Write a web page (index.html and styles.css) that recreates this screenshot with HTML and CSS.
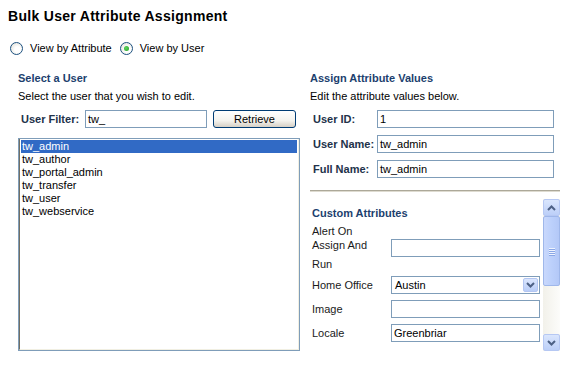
FILE: index.html
```html
<!DOCTYPE html>
<html>
<head>
<meta charset="utf-8">
<link rel="stylesheet" href="styles.css">
</head>
<body>
<div class="page">
  <h1 class="title">Bulk User Attribute Assignment</h1>
  <div class="toggle">
    <label class="radio-opt"><span class="radio"></span>View by Attribute</label>
    <label class="radio-opt"><span class="radio checked"><span class="dot"></span></span>View by User</label>
  </div>
  <div class="columns">
    <div class="col-left">
      <h2 class="heading">Select a User</h2>
      <p class="desc">Select the user that you wish to edit.</p>
      <div class="filter-row">
        <span class="lbl">User Filter:</span>
        <span class="input filter-input">tw_</span>
        <span class="btn">Retrieve</span>
      </div>
      <div class="listbox">
        <div class="listbox-inner">
          <div class="item selected">tw_admin</div>
          <div class="item">tw_author</div>
          <div class="item">tw_portal_admin</div>
          <div class="item">tw_transfer</div>
          <div class="item">tw_user</div>
          <div class="item">tw_webservice</div>
        </div>
      </div>
    </div>
    <div class="col-right">
      <h2 class="heading">Assign Attribute Values</h2>
      <p class="desc">Edit the attribute values below.</p>
      <div class="field-row"><span class="lbl field-lbl">User ID:</span><span class="input field-input">1</span></div>
      <div class="field-row"><span class="lbl field-lbl">User Name:</span><span class="input field-input">tw_admin</span></div>
      <div class="field-row"><span class="lbl field-lbl">Full Name:</span><span class="input field-input">tw_admin</span></div>
      <div class="rule"></div>
      <div class="custom">
        <div class="custom-content">
          <h2 class="heading custom-heading">Custom Attributes</h2>
          <div class="attr-row attr-tall">
            <span class="attr-lbl tall-lbl"><span class="ln">Alert On</span><span class="ln">Assign And</span><span class="ln ln-run">Run</span></span>
            <span class="input attr-input"></span>
          </div>
          <div class="attr-row"><span class="attr-lbl">Home Office</span><span class="input attr-input select">Austin<span class="dd"><svg width="9" height="6" viewBox="0 0 9 6"><path d="M1 1 L4.5 4.5 L8 1" fill="none" stroke="#4d6185" stroke-width="2"/></svg></span></span></div>
          <div class="attr-row"><span class="attr-lbl">Image</span><span class="input attr-input"></span></div>
          <div class="attr-row"><span class="attr-lbl">Locale</span><span class="input attr-input">Greenbriar</span></div>
        </div>
        <div class="scrollbar">
          <div class="sb-btn"><svg width="9" height="6" viewBox="0 0 9 6"><path d="M1 5 L4.5 1.5 L8 5" fill="none" stroke="#4d6185" stroke-width="2"/></svg></div>
          <div class="sb-thumb"><span class="grip"></span><span class="grip"></span><span class="grip"></span><span class="grip"></span></div>
          <div class="sb-track"></div>
          <div class="sb-btn"><svg width="9" height="6" viewBox="0 0 9 6"><path d="M1 1 L4.5 4.5 L8 1" fill="none" stroke="#4d6185" stroke-width="2"/></svg></div>
        </div>
      </div>
    </div>
  </div>
</div>
</body>
</html>
```

FILE: styles.css
```css
* { box-sizing: border-box; }
html, body { margin: 0; padding: 0; background: #fff; }
body {
  font-family: "Liberation Sans", Arial, sans-serif;
  font-size: 11px;
  color: #000;
}
.page { padding: 8px 0 0 8px; width: 585px; height: 365px; overflow: hidden; }
.title {
  margin: 0;
  font-size: 14px;
  line-height: 17px;
  font-weight: bold;
  letter-spacing: 0.3px;
}
.toggle {
  display: flex;
  gap: 8px;
  margin-top: 15px;
  padding-left: 2px;
  height: 16px;
  align-items: center;
}
.radio-opt { display: flex; align-items: center; gap: 7px; }
.radio {
  width: 13px; height: 13px; border-radius: 50%;
  border: 1px solid #1c5180;
  background: radial-gradient(circle at 60% 60%, #fff 30%, #dcdad0 100%);
  display: flex; align-items: center; justify-content: center;
}
.dot {
  width: 5px; height: 5px; border-radius: 50%;
  background: radial-gradient(circle at 40% 40%, #5fd35f, #21a121);
}
.columns { display: flex; margin-top: 15px; gap: 10px; padding-left: 10px; }
.col-left { width: 282px; }
.col-right { width: 250px; }
.heading {
  margin: 0;
  font-size: 11px;
  line-height: 14px;
  font-weight: bold;
  color: #1c3f6e;
}
.desc { margin: 4px 0 0 0; line-height: 14px; }
.filter-row { display: flex; align-items: center; margin-top: 7px; height: 18px; }
.lbl { font-weight: bold; color: #22324a; }
.filter-row .lbl { margin-left: 3px; width: 64px; }
.input {
  border: 1px solid #7f9db9;
  height: 18px;
  line-height: 16px;
  padding-left: 2px;
  background: #fff;
}
.filter-input { width: 122px; }
.btn {
  margin-left: 6px;
  width: 83px; height: 18px;
  border: 1px solid #003c74;
  border-radius: 3px;
  background: linear-gradient(#ffffff, #f4f3ee 60%, #d6d0c5);
  text-align: center;
  line-height: 16px;
}
.listbox {
  margin-top: 10px;
  width: 282px; height: 213px;
  border: 1px solid #7f9db9;
}
.listbox-inner {
  height: 100%;
  border-left: 1px solid #716f64;
  border-right: 1px solid #f1efe2;
  border-bottom: 1px solid #f1efe2;
  padding: 1px 1px 0 1px;
}
.item { line-height: 13px; height: 13px; padding-left: 1px; }
.item.selected { background: #316ac5; color: #fff; }
.field-row { display: flex; align-items: center; height: 18px; margin-top: 7px; }
.desc + .field-row { margin-top: 7px; }
.field-lbl { width: 67px; padding-left: 3px; }
.field-input { width: 177px; }
.rule { margin-top: 12px; height: 2px; border-top: 1px solid #aca899; border-bottom: 1px solid #dedbd0; width: 250px; }
.custom { margin-top: 7px; display: flex; height: 152px; width: 250px; }
.custom-content { flex: 1; overflow: hidden; padding: 7px 0 0 2px; }
.custom-heading { line-height: 14px; }
.attr-row { display: flex; align-items: center; height: 18px; margin-top: 6px; }
.attr-tall { height: 47px; margin-top: 4px; }
.attr-lbl { width: 79px; line-height: 17px; color: #1a1a1a; }
.tall-lbl { display: flex; flex-direction: column; align-self: stretch; }
.ln { line-height: 14px; height: 14px; }
.ln-run { margin-top: 5px; }
.attr-tall + .attr-row { margin-top: 5px; }
.attr-input { width: 149px; position: relative; }
.select { padding-left: 3px; }
.dd {
  position: absolute; right: 1px; top: 1px;
  width: 15px; height: 14px;
  background: linear-gradient(#dbe6fd, #b9cdf7);
  border: 1px solid #b3c6f2;
  border-radius: 2px;
  display: flex; align-items: center; justify-content: center;
}
.scrollbar {
  width: 17px;
  display: flex; flex-direction: column;
  background: #f5f4ee;
}
.sb-btn {
  height: 17px;
  background: linear-gradient(#dae6fd, #bccff8);
  border: 1px solid #b6c8f3;
  border-radius: 2px;
  display: flex; align-items: center; justify-content: center;
}
.sb-thumb {
  height: 70px;
  background: linear-gradient(90deg, #c9d8fc, #bcd0fb 50%, #b3c8f7);
  border: 1px solid #9fb7ea;
  border-radius: 2px;
  display: flex; flex-direction: column; align-items: center; justify-content: center; gap: 1px;
}
.grip { width: 6px; height: 1px; background: #eef3fe; box-shadow: 0 1px 0 #8aa7e6; }
.sb-track { flex: 1; background: linear-gradient(90deg, #f2f1ea, #fcfcfa); }
```
